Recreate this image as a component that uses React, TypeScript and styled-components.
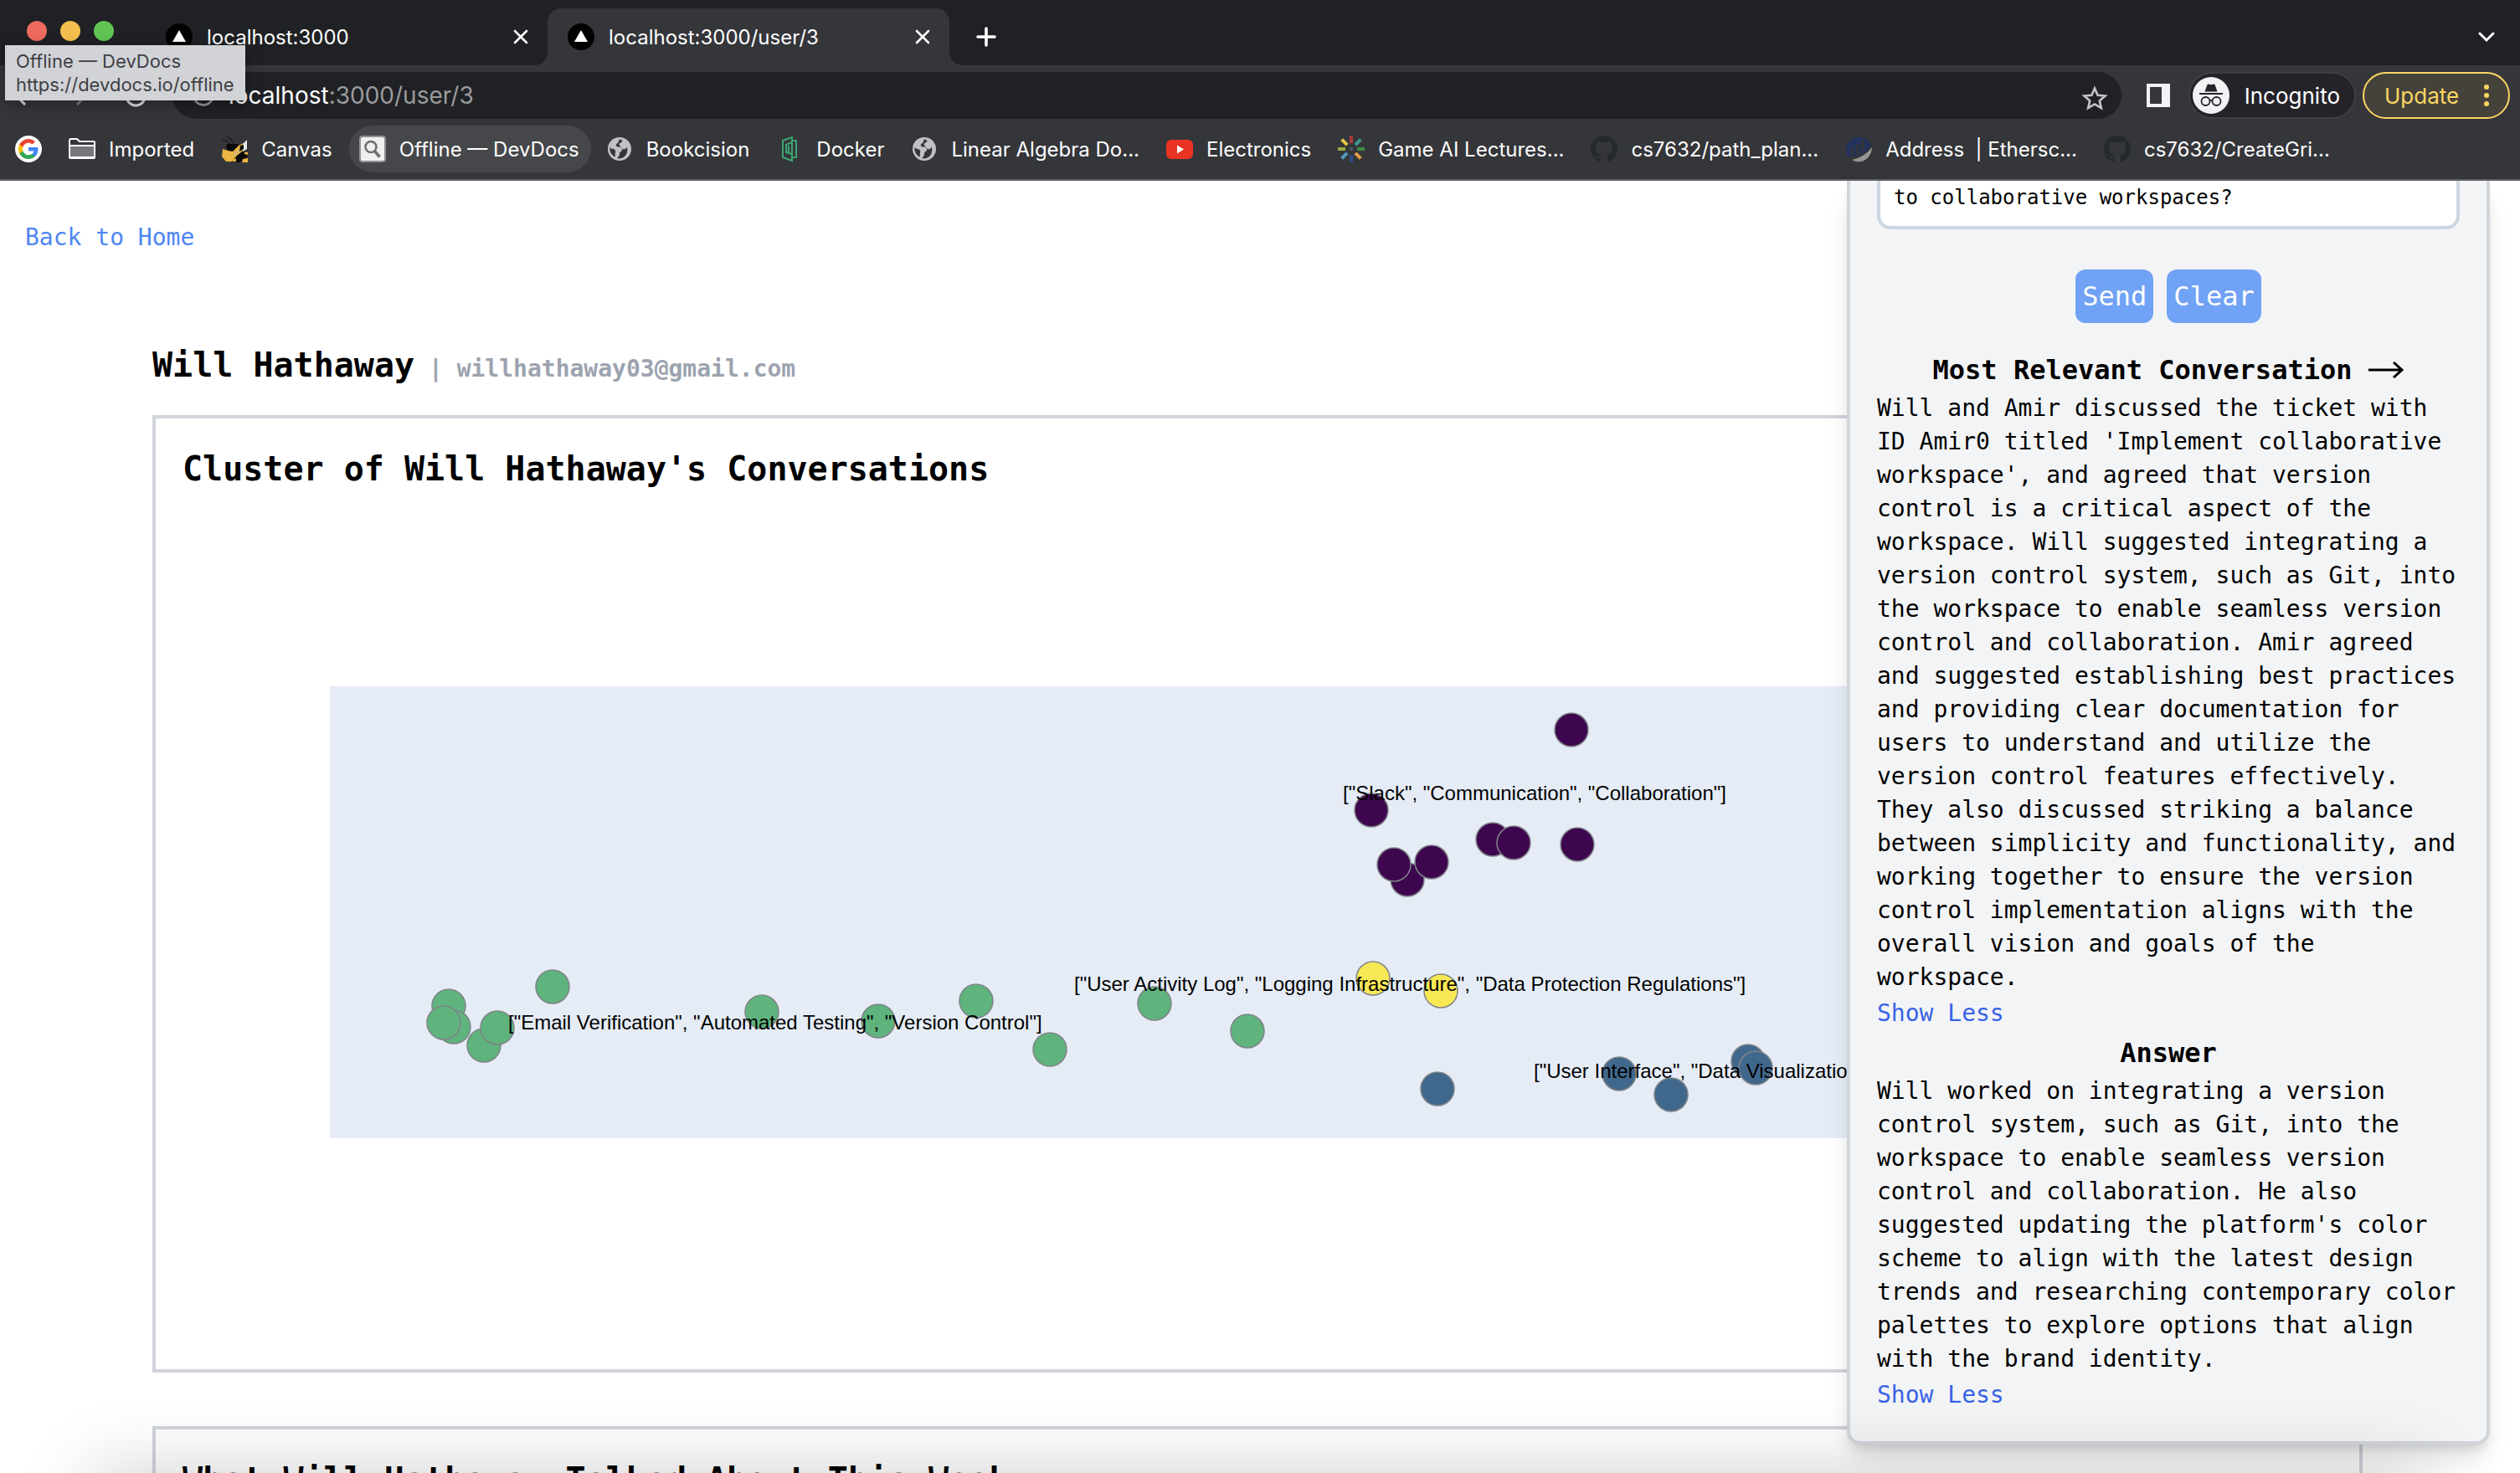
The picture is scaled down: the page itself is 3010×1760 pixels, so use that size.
import React, { useState } from "react";
import styled, { createGlobalStyle, css } from "styled-components";

const ui = `Inter, Roboto, "Liberation Sans", sans-serif`;
const mono = `"DejaVu Sans Mono", "Liberation Mono", monospace`;

const Global = createGlobalStyle`
  *, *::before, *::after { box-sizing: border-box; }
  body { margin: 0; background: #fff; font-family: ${mono}; color: #000; }
  button, input, textarea { font: inherit; color: inherit; margin: 0; }
  button { border: 0; padding: 0; background: none; cursor: pointer; }
  h1, h2, h3, p { margin: 0; }
  a { text-decoration: none; color: inherit; }
  svg { display: block; flex: none; }
`;

const Window = styled.div`
  position: relative;
  display: flex;
  flex-direction: column;
  height: 100vh;
  overflow: hidden;
`;

/* ---------- browser chrome ---------- */

const Chrome = styled.header`
  flex: none;
  font-family: ${ui};
  font-size: 24px;
  color: #fff;
  background: #35363a;
  border-bottom: 2px solid #5f5f64;
`;

const TabStrip = styled.div`
  display: flex;
  align-items: flex-end;
  height: 78px;
  background: #202124;
`;

const Lights = styled.div`
  display: flex;
  gap: 16px;
  align-self: center;
  padding: 0 38px 4px 32px;
`;

const Light = styled.button<{ $color: string }>`
  width: 24px;
  height: 24px;
  border-radius: 50%;
  background: ${(p) => p.$color};
`;

const Tab = styled.div<{ $active?: boolean }>`
  position: relative;
  display: flex;
  align-items: center;
  gap: 17px;
  width: 480px;
  height: 68px;
  padding: 0 20px 0 24px;
  border-radius: 16px 16px 0 0;
  ${(p) =>
    p.$active &&
    css`
      background: #35363a;
      &::before,
      &::after {
        content: "";
        position: absolute;
        bottom: 0;
        width: 16px;
        height: 16px;
      }
      &::before {
        left: -16px;
        background: radial-gradient(circle at 0 0, transparent 16px, #35363a 16px);
      }
      &::after {
        right: -16px;
        background: radial-gradient(circle at 100% 0, transparent 16px, #35363a 16px);
      }
    `}
`;

const TabTitle = styled.span`
  flex: 1;
  white-space: nowrap;
`;

const IconButton = styled.button`
  display: grid;
  place-items: center;
  flex: none;
  width: 24px;
  height: 24px;
`;

const NewTab = styled(IconButton)`
  width: 88px;
  height: 68px;
`;

const TabSearch = styled(IconButton)`
  width: 80px;
  height: 68px;
  margin-left: auto;
`;

const Toolbar = styled.div`
  display: flex;
  align-items: center;
  height: 72px;
  padding: 0 12px 0 16px;
`;

const NavButtons = styled.div`
  display: flex;
  gap: 42px;
  width: 190px;
`;

const AddressBar = styled.div`
  display: flex;
  align-items: center;
  flex: 1;
  gap: 17px;
  height: 56px;
  padding: 0 24px;
  border-radius: 28px;
  background: #202124;
  font-size: 28px;
`;

const Url = styled.span`
  flex: 1;
  color: #9a9b9e;
  b {
    font-weight: 400;
    color: #fff;
  }
`;

const SidePanel = styled(IconButton)`
  width: 28px;
  height: 28px;
  margin: 0 22px 0 30px;
`;

const Incognito = styled.button`
  display: flex;
  align-items: center;
  justify-content: space-between;
  width: 200px;
  height: 56px;
  margin-right: 8px;
  padding: 0 17px 0 3px;
  border: 2px solid #3f3e44;
  border-radius: 28px;
  background: #242329;
  font-size: 26px;
`;

const Update = styled.button`
  display: flex;
  align-items: center;
  justify-content: space-between;
  width: 176px;
  height: 56px;
  padding: 0 23px 0 24px;
  border: 2px solid #fdd663;
  border-radius: 28px;
  background: #44423b;
  color: #fdd663;
  font-size: 26px;
`;

const Bookmarks = styled.nav`
  display: flex;
  align-items: center;
  height: 64px;
  padding: 0 0 8px 6px;
`;

const Bookmark = styled.a<{ $hover?: boolean }>`
  display: flex;
  align-items: center;
  gap: 16px;
  height: 56px;
  padding: 0 14px 0 12px;
  margin-right: 6px;
  border-radius: 28px;
  white-space: pre;
  background: ${(p) => (p.$hover ? "#46474b" : "none")};
`;

const Tooltip = styled.div`
  position: absolute;
  z-index: 5;
  left: 6px;
  top: 54px;
  padding: 5px 13px;
  background: #d1d3d7;
  color: #3f4043;
  font-family: ${ui};
  font-size: 22px;
  line-height: 28px;
  box-shadow: 0 4px 16px rgba(0, 0, 0, 0.35);
`;

/* ---------- page ---------- */

const Page = styled.main`
  position: relative;
  flex: 1;
  min-height: 0;
  overflow: hidden;
`;

const BackLink = styled.a`
  display: block;
  width: max-content;
  margin: 48px 0 0 30px;
  color: #4f86f2;
  font-size: 28px;
  line-height: 40px;
`;

const Content = styled.div`
  display: flex;
  flex-direction: column;
  margin: 104px 188px 0 182px;
`;

const UserName = styled.h1`
  margin-bottom: 32px;
  font-size: 40px;
  line-height: 56px;
`;

const Email = styled.span`
  color: #9ca3af;
  font-size: 28px;
  line-height: 28px;
`;

const Card = styled.section`
  min-height: 1144px;
  margin-bottom: 64px;
  padding: 32px;
  border: 4px solid #d1d5db;
`;

const CardTitle = styled.h2`
  font-size: 40px;
  line-height: 56px;
`;

const Chart = styled.svg`
  width: 100%;
  height: 900px;
  margin-top: 32px;
  font-family: "Liberation Sans", Arial, sans-serif;
  font-size: 24px;
`;

const Panel = styled.aside`
  position: absolute;
  top: 0;
  right: 36px;
  display: flex;
  flex-direction: column;
  width: 768px;
  padding: 0 32px 32px;
  border: 4px solid #d1d5db;
  border-top: 0;
  border-radius: 0 0 16px 16px;
  background: #f3f4f6;
  box-shadow: 0 20px 30px -6px rgba(0, 0, 0, 0.12), 0 8px 12px -4px rgba(0, 0, 0, 0.12);
`;

const Question = styled.textarea`
  display: block;
  width: 100%;
  height: 58px;
  padding: 4px 16px 0;
  border: 4px solid #cbd5e1;
  border-top: 0;
  border-radius: 0 0 16px 16px;
  background: #fff;
  font-size: 24px;
  line-height: 32px;
  resize: none;
  overflow: hidden;
  outline: none;
`;

const Actions = styled.div`
  display: flex;
  justify-content: center;
  gap: 16px;
  margin: 48px 0 32px;
`;

const Action = styled.button`
  height: 64px;
  padding: 0 8px;
  border-radius: 12px;
  background: #70a2f5;
  color: #fff;
  font-size: 32px;
  line-height: 48px;
`;

const PanelTitle = styled.h3`
  display: flex;
  align-items: center;
  justify-content: center;
  gap: 20px;
  margin-bottom: 2px;
  font-size: 32px;
  line-height: 48px;
`;

const Body = styled.p`
  font-size: 28px;
  line-height: 40px;
`;

const ShowLess = styled.button`
  align-self: flex-start;
  color: #3763e6;
  font-size: 28px;
  line-height: 46px;
`;

const DockShadow = styled.div`
  position: absolute;
  top: 100%;
  left: 110px;
  right: 110px;
  height: 100px;
  box-shadow: 0 0 90px rgba(0, 0, 0, 0.2);
  pointer-events: none;
`;

/* ---------- icons ---------- */

const Vercel = () => (
  <svg width="32" height="32" viewBox="0 0 32 32">
    <circle cx="16" cy="16" r="16" fill="#000" />
    <path d="M16 8l8 14H8z" fill="#fff" />
  </svg>
);

const Close = () => (
  <svg width="18" height="18" viewBox="0 0 18 18" stroke="#fff" strokeWidth="2.6" strokeLinecap="round">
    <path d="M2 2l14 14M16 2L2 16" />
  </svg>
);

const Google = () => (
  <svg width="32" height="32" viewBox="0 0 32 32">
    <circle cx="16" cy="16" r="16" fill="#fff" />
    <g transform="translate(4 4)">
      <path fill="#4285f4" d="M23.5 12.3c0-.8-.1-1.600-.2-2.300H12v4.500h6.500a5.500 5.500 0 0 1-2.400 3.600v3h3.900c2.300-2.100 3.500-5.200 3.500-8.800z" />
      <path fill="#34a853" d="M12 24c3.200 0 6-1.100 8-2.900l-3.900-3c-1.100.7-2.500 1.200-4.100 1.200-3.100 0-5.800-2.100-6.700-5H1.300v3.100A12 12 0 0 0 12 24z" />
      <path fill="#fbbc05" d="M5.300 14.300a7.200 7.200 0 0 1 0-4.600V6.600h-4a12 12 0 0 0 0 10.800z" />
      <path fill="#ea4335" d="M12 4.800c1.800 0 3.300.6 4.600 1.800L20 3.200A12 12 0 0 0 1.300 6.600l4 3.100c.9-2.800 3.600-4.900 6.700-4.900z" />
    </g>
  </svg>
);

const Folder = () => (
  <svg width="32" height="32" viewBox="0 0 32 32" fill="none" stroke="#fff" strokeWidth="2">
    <path d="M1 26V6q0-2 2-2h7l3 3h17q1 0 1 1v18q0 1-1 1H2q-1 0-1-1z" />
    <path d="M1 12h30v14H1z" fill="#77787b" />
  </svg>
);

const Bee = () => (
  <svg width="32" height="32" viewBox="0 0 32 32">
    <path d="M1 6h5l5 4M7 1l4 2 4 6" stroke="#1d1d1f" strokeWidth="1.600" fill="none" />
    <path d="M7 10h13l2 4-4 6-9-1-3-5z" fill="#0a0a0a" />
    <path d="M2 16l6 2 6 1 7-7 6-3v8l-9 8-4 6H6l-5-6z" fill="#eab541" />
    <path d="M26 10l5-5v11l-5 3z" fill="#e6e6e6" />
    <path d="M15 22l8-7 1 2-9 8z" fill="#c9b98a" />
    <path d="M23 12l4-1v5l-5 3z" fill="#0a0a0a" />
    <path d="M13 31l6-7 7-5 6 3-2 6-7 4z" fill="#0a0a0a" />
    <path d="M26 28l6-1v5h-7zM28 20h4v3l-4-1zM14 29l4-2v4h-4z" fill="#eab541" />
  </svg>
);

const DevDocs = () => (
  <svg width="32" height="32" viewBox="0 0 32 32">
    <rect x="1" y="1" width="30" height="30" rx="3" fill="#efefef" stroke="#8e9091" strokeWidth="2" />
    <circle cx="14" cy="13.500" r="6.500" fill="none" stroke="#6f7072" strokeWidth="2.600" />
    <path d="M18.500 18.500l6 7" stroke="#6f7072" strokeWidth="3.600" />
  </svg>
);

const Globe = () => (
  <svg width="32" height="32" viewBox="0 0 32 32">
    <circle cx="16" cy="16" r="14" fill="#bfc1c5" />
    <path
      fill="#35363a"
      d="M17 4.500c-3 .5-1 3.500-4 5-2 1-1 4 1 4 3 0 5 .5 5 3.500 0 2-3 2-3 4.500 0 2-1 4-3 5.500 5 1.500 9-1 11-4.500 1.500-3 2-6 .5-9-1 3-4 3.500-6 2-2-1.500-1-4-3-4.500 0-2.500 3-2.500 4-4.500-.8-1-1.500-1.700-2.500-2zM4.500 14c-.8 5 2 9.500 6 11.500 1-2-.5-3 .5-5 1-2-.5-4.500-3-4.500-1.500 0-2.500-1-3.500-2z"
    />
  </svg>
);

const DockerIcon = () => (
  <svg width="32" height="32" viewBox="0 0 32 32" fill="none" stroke="#3da571" strokeWidth="2">
    <path d="M8 6l11-4v28L8 26z" />
    <path d="M19 22l-7-2V11l7-3M15 12v8M19 6h5v20h-5" />
  </svg>
);

const YouTube = () => (
  <svg width="32" height="32" viewBox="0 0 32 32">
    <rect y="5" width="32" height="23" rx="6" fill="#ea3323" />
    <path d="M13 11.500l8 5-8 5z" fill="#fff" />
  </svg>
);

const rays = ["#a83a3b", "#3f9a8c", "#3f8a46", "#e0a043", "#2f4a87", "#4c9fc0", "#9aaa45", "#e3c644"];
const Burst = () => (
  <svg width="32" height="32" viewBox="0 0 32 32">
    {rays.map((c, i) => (
      <path key={c} d="M16 0v9" stroke={c} strokeWidth="4" transform={`rotate(${i * 45} 16 16)`} />
    ))}
    <path d="M14 14h4v4h-4z" fill="#55565a" />
  </svg>
);

const GitHub = () => (
  <svg width="32" height="32" viewBox="0 0 16 16" fill="#24292e">
    <path d="M8 0C3.580 0 0 3.580 0 8c0 3.540 2.290 6.530 5.470 7.590.4.070.55-.17.55-.38 0-.19-.01-.82-.01-1.490-2.010.37-2.530-.49-2.690-.94-.09-.23-.48-.94-.82-1.130-.28-.15-.68-.52-.01-.53.63-.01 1.080.58 1.230.82.720 1.210 1.870.87 2.330.66.070-.52.280-.87.510-1.070-1.780-.2-3.640-.89-3.640-3.950 0-.87.310-1.590.820-2.150-.08-.2-.36-1.020.080-2.120 0 0 .67-.21 2.200.82.640-.18 1.320-.27 2-.27s1.360.09 2 .27c1.530-1.040 2.200-.82 2.200-.82.440 1.100.160 1.920.080 2.120.510.560.820 1.270.820 2.150 0 3.070-1.870 3.750-3.650 3.950.290.250.540.730.540 1.480 0 1.070-.01 1.930-.01 2.200 0 .210.150.460.550.380A8.010 8.010 0 0 0 16 8c0-4.420-3.580-8-8-8z" />
  </svg>
);

const Etherscan = () => (
  <svg width="32" height="32" viewBox="0 0 32 32">
    <path d="M3 25A15.500 15.500 0 1 1 31 12c-5 8-15 13-28 13z" fill="#22325c" />
    <path d="M8 29c10-2 19-8 24-15 0 12-12 22-24 15z" fill="#979695" />
    <path d="M9 14v9M15 10v12M21 6v12" stroke="#35363a" strokeWidth="3.500" />
  </svg>
);

const IncognitoIcon = () => (
  <svg width="44" height="44" viewBox="0 0 44 44">
    <circle cx="22" cy="22" r="22" fill="#f1f2f4" />
    <path d="M14.500 17.500l3-8.500q1-1 2.500-.2 2 .8 4 0 1.500-.8 2.500.2l3 8.500z" fill="#242329" />
    <path d="M8 20h28" stroke="#242329" strokeWidth="2" />
    <g fill="none" stroke="#242329" strokeWidth="1.800">
      <circle cx="15.500" cy="29" r="5" />
      <circle cx="28.500" cy="29" r="5" />
      <path d="M20.500 28.500q1.500-1.200 3 0" />
    </g>
  </svg>
);

const bookmarks: { icon: React.ReactNode; label?: string; hover?: boolean }[] = [
  { icon: <Google /> },
  { icon: <Folder />, label: "Imported" },
  { icon: <Bee />, label: "Canvas" },
  { icon: <DevDocs />, label: "Offline — DevDocs", hover: true },
  { icon: <Globe />, label: "Bookcision" },
  { icon: <DockerIcon />, label: "Docker" },
  { icon: <Globe />, label: "Linear Algebra Do..." },
  { icon: <YouTube />, label: "Electronics" },
  { icon: <Burst />, label: "Game AI Lectures..." },
  { icon: <GitHub />, label: "cs7632/path_plan..." },
  { icon: <Etherscan />, label: "Address  | Ethersc..." },
  { icon: <GitHub />, label: "cs7632/CreateGri..." },
];

/* ---------- chart data, in chart pixels ---------- */

const clusters = [
  {
    color: "#3e064f",
    points: [[1659, 252], [1420, 348], [1565, 383], [1590, 387], [1666, 389], [1463, 431], [1447, 413], [1492, 410]],
  },
  {
    color: "#5fb37d",
    points: [
      [442, 559], [318, 582], [324, 607], [312, 602], [360, 629], [376, 608],
      [692, 589], [831, 600], [948, 576], [1036, 634], [1161, 579], [1272, 612],
    ],
  },
  { color: "#f9e855", points: [[1422, 549], [1503, 564]] },
  { color: "#40688c", points: [[1499, 681], [1716, 663], [1778, 688], [1870, 648], [1879, 656]] },
];

const labels = [
  { x: 1386, y: 336, text: '["Slack", "Communication", "Collaboration"]' },
  { x: 1065, y: 564, text: '["User Activity Log", "Logging Infrastructure", "Data Protection Regulations"]' },
  { x: 389, y: 610, text: '["Email Verification", "Automated Testing", "Version Control"]' },
  { x: 1614, y: 668, text: '["User Interface", "Data Visualization"]' },
];

const conversation =
  "Will and Amir discussed the ticket with ID Amir0 titled 'Implement collaborative workspace', and agreed that version control is a critical aspect of the workspace. Will suggested integrating a version control system, such as Git, into the workspace to enable seamless version control and collaboration. Amir agreed and suggested establishing best practices and providing clear documentation for users to understand and utilize the version control features effectively. They also discussed striking a balance between simplicity and functionality, and working together to ensure the version control implementation aligns with the overall vision and goals of the workspace.";

const answer =
  "Will worked on integrating a version control system, such as Git, into the workspace to enable seamless version control and collaboration. He also suggested updating the platform's color scheme to align with the latest design trends and researching contemporary color palettes to explore options that align with the brand identity.";

export default function App() {
  const [question, setQuestion] = useState("to collaborative workspaces?");

  return (
    <Window>
      <Global />
      <Chrome>
        <TabStrip>
          <Lights>
            <Light $color="#ed6a5e" aria-label="Close window" />
            <Light $color="#f5bf4f" aria-label="Minimize window" />
            <Light $color="#61c554" aria-label="Zoom window" />
          </Lights>
          <Tab>
            <Vercel />
            <TabTitle>localhost:3000</TabTitle>
            <IconButton aria-label="Close tab"><Close /></IconButton>
          </Tab>
          <Tab $active>
            <Vercel />
            <TabTitle>localhost:3000/user/3</TabTitle>
            <IconButton aria-label="Close tab"><Close /></IconButton>
          </Tab>
          <NewTab aria-label="New tab">
            <svg width="24" height="24" stroke="#fff" strokeWidth="3.600" strokeLinecap="round">
              <path d="M12 2v20M2 12h20" />
            </svg>
          </NewTab>
          <TabSearch aria-label="Search tabs">
            <svg width="20" height="14" fill="none" stroke="#fff" strokeWidth="3" strokeLinecap="round">
              <path d="M2 3l8 8 8-8" />
            </svg>
          </TabSearch>
        </TabStrip>

        <Toolbar>
          <NavButtons>
            <IconButton aria-label="Back">
              <svg width="24" height="24" fill="none" stroke="#e4e5e8" strokeWidth="3">
                <path d="M24 12H4M14 1L3 12l11 11" />
              </svg>
            </IconButton>
            <IconButton aria-label="Forward">
              <svg width="24" height="24" fill="none" stroke="#7c7d81" strokeWidth="3">
                <path d="M0 12h20M10 1l11 11-11 11" />
              </svg>
            </IconButton>
            <IconButton aria-label="Reload">
              <svg width="28" height="28" fill="none" stroke="#e4e5e8" strokeWidth="3">
                <path d="M24 8a11 11 0 1 0 1 7M25 2v8h-8" />
              </svg>
            </IconButton>
          </NavButtons>
          <AddressBar>
            <svg width="26" height="26" fill="none" stroke="#9a9b9e" strokeWidth="2.600">
              <circle cx="13" cy="13" r="11.500" />
              <path d="M13 12v7M13 7v3" />
            </svg>
            <Url><b>localhost</b>:3000/user/3</Url>
            <IconButton aria-label="Bookmark this tab">
              <svg width="32" height="30" viewBox="0 0 32 30" fill="none" stroke="#c4c5c8" strokeWidth="2.600">
                <path d="M16 3.500l3.600 8.200 8.900.8-6.700 5.900 2 8.700-7.800-4.600-7.800 4.600 2-8.700-6.700-5.900 8.900-.8z" />
              </svg>
            </IconButton>
          </AddressBar>
          <SidePanel aria-label="Side panel">
            <svg width="28" height="28"><path fillRule="evenodd" fill="#f1f2f4" d="M0 0h28v28H0zM4 4v20h14V4z" /></svg>
          </SidePanel>
          <Incognito><IncognitoIcon />Incognito</Incognito>
          <Update>
            Update
            <svg width="6" height="28" fill="#fdd663">
              <circle cx="3" cy="4" r="3" /><circle cx="3" cy="14" r="3" /><circle cx="3" cy="24" r="3" />
            </svg>
          </Update>
        </Toolbar>

        <Bookmarks>
          {bookmarks.map((b, i) => (
            <Bookmark key={i} href="#" $hover={b.hover} aria-label={b.label ?? "Google"}>
              {b.icon}
              {b.label && <span>{b.label}</span>}
            </Bookmark>
          ))}
        </Bookmarks>
      </Chrome>

      <Tooltip role="tooltip">
        Offline — DevDocs
        <br />
        https://devdocs.io/offline
      </Tooltip>

      <Page>
        <BackLink href="#">Back to Home</BackLink>
        <Content>
          <UserName>
            Will Hathaway<Email> | willhathaway03@gmail.com</Email>
          </UserName>
          <Card>
            <CardTitle>Cluster of Will Hathaway's Conversations</CardTitle>
            <Chart role="img" aria-label="Conversation clusters">
              <rect x="176" y="200" width="2216" height="540" fill="#e5ecf6" />
              {clusters.map((c) =>
                c.points.map(([x, y], i) => (
                  <circle key={c.color + i} cx={x} cy={y} r="20" fill={c.color} stroke="#808488" strokeWidth="1.500" />
                ))
              )}
              {labels.map((l) => (
                <text key={l.text} x={l.x} y={l.y}>{l.text}</text>
              ))}
            </Chart>
          </Card>
          <Card>
            <CardTitle>What Will Hathaway Talked About This Week</CardTitle>
          </Card>
        </Content>

        <Panel>
          <Question aria-label="Question" value={question} onChange={(e) => setQuestion(e.target.value)} />
          <Actions>
            <Action>Send</Action>
            <Action onClick={() => setQuestion("")}>Clear</Action>
          </Actions>
          <PanelTitle>
            Most Relevant Conversation
            <svg width="42" height="20" fill="none" stroke="#000" strokeWidth="3">
              <path d="M0 10h39M30 1l10 9-10 9" />
            </svg>
          </PanelTitle>
          <Body>{conversation}</Body>
          <ShowLess>Show Less</ShowLess>
          <PanelTitle>Answer</PanelTitle>
          <Body>{answer}</Body>
          <ShowLess>Show Less</ShowLess>
        </Panel>
      </Page>
      <DockShadow />
    </Window>
  );
}
